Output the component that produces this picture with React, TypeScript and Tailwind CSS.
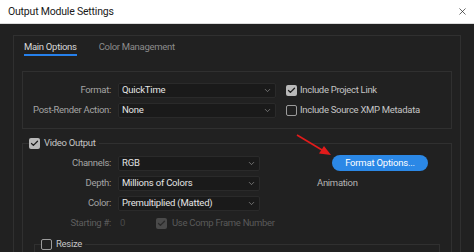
import { ChevronDown, Check, X } from 'lucide-react';

const font = { fontFamily: 'Roboto, "Noto Sans", sans-serif' };

function Dropdown({ value, w }: { value: string; w: string }) {
    return (
        <div className={`${w} flex h-[15px] items-center justify-between rounded-[2px] border border-[#2a2a2a] bg-[#1a1a1a] pr-[3px] pl-[3px]`}>
            <span className="text-[9.5px] tracking-[-0.2px] whitespace-nowrap text-[#e4e4e4]">{value}</span>
            <ChevronDown className="h-[9px] w-[9px] text-[#8a8a8a]" strokeWidth={2} />
        </div>
    );
}

function Box({ checked, dim }: { checked?: boolean; dim?: boolean }) {
    if (checked) {
        return (
            <div className={`flex h-[11px] w-[11px] shrink-0 items-center justify-center rounded-[2px] ${dim ? 'bg-[#4a4a4a]' : 'bg-[#b9b9b9]'}`}>
                <Check className={`h-[9px] w-[9px] ${dim ? 'text-[#2a2a2a]' : 'text-[#1e1e1e]'}`} strokeWidth={3.5} />
            </div>
        );
    }
    return <div className="h-[11px] w-[11px] shrink-0 rounded-[2px] border border-[#9c9c9c]"></div>;
}

function Label({ text, dim }: { text: string; dim?: boolean }) {
    return (
        <div className={`w-[88px] shrink-0 text-right text-[9.5px] tracking-[-0.3px] whitespace-nowrap ${dim ? 'text-[#5e5e5e]' : 'text-[#a4a4a4]'}`}>
            {text}
        </div>
    );
}

export default function App() {
    return (
        <div className="relative flex h-[252px] w-[474px] flex-col overflow-hidden bg-[#212121]" style={font}>
            <div className="flex h-[24px] shrink-0 items-center justify-between border-b border-[#dcdcdc] bg-white pr-[6px] pl-[8px]">
                <span className="text-[10.5px] tracking-[-0.2px] text-[#1a1a1a]">Output Module Settings</span>
                <X className="h-[11px] w-[11px] text-[#222]" strokeWidth={1.5} />
            </div>

            <div className="flex-1 px-[13px] pt-[11px]">
                <div className="h-full border-t border-r border-l border-[#303030] px-[8px]">
                    <div className="flex gap-[22px] pt-[4px] pl-[2px] text-[9.5px] leading-[14px] tracking-[-0.3px]">
                        <span className="border-b-2 border-[#2680eb] text-[#d8d8d8]">Main Options</span>
                        <span className="text-[#8c8c8c]">Color Management</span>
                    </div>

                    <div className="mt-[15px] border border-[#303030] pt-[8px] pb-[8px]">
                        <div className="flex h-[20px] items-center">
                            <Label text="Format:" />
                            <div className="ml-[7px]">
                                <Dropdown value="QuickTime" w="w-[158px]" />
                            </div>
                            <div className="ml-[10px] flex items-center gap-[3px]">
                                <Box checked />
                                <span className="text-[9.5px] tracking-[-0.3px] whitespace-nowrap text-[#c4c4c4]">Include Project Link</span>
                            </div>
                        </div>
                        <div className="flex h-[20px] items-center">
                            <Label text="Post-Render Action:" />
                            <div className="ml-[7px]">
                                <Dropdown value="None" w="w-[158px]" />
                            </div>
                            <div className="ml-[10px] flex items-center gap-[3px]">
                                <Box />
                                <span className="text-[9.5px] tracking-[-0.3px] whitespace-nowrap text-[#c4c4c4]">Include Source XMP Metadata</span>
                            </div>
                        </div>
                    </div>

                    <fieldset className="mt-[8px] border border-[#303030] px-[6px]">
                        <legend className="flex items-center gap-[4px] pr-[3px] text-[9.5px] leading-[12px] tracking-[-0.3px] text-[#c4c4c4]">
                            <Box checked />
                            <span>Video Output</span>
                        </legend>
                        <div className="-mx-[6px] pt-[4px]">
                            <div className="flex h-[20px] items-center">
                                <Label text="Channels:" />
                                <div className="ml-[7px]">
                                    <Dropdown value="RGB" w="w-[142px]" />
                                </div>
                                <button className="ml-[72px] h-[16px] w-[96px] rounded-full bg-[#2b88e6] text-[9.5px] tracking-[-0.2px] text-white">
                                    Format Options...
                                </button>
                            </div>
                            <div className="flex h-[20px] items-center">
                                <Label text="Depth:" />
                                <div className="ml-[7px]">
                                    <Dropdown value="Millions of Colors" w="w-[142px]" />
                                </div>
                                <span className="ml-[57px] text-[9.5px] tracking-[-0.3px] text-[#b4b4b4]">Animation</span>
                            </div>
                            <div className="flex h-[20px] items-center">
                                <Label text="Color:" />
                                <div className="ml-[7px]">
                                    <Dropdown value="Premultiplied (Matted)" w="w-[142px]" />
                                </div>
                            </div>
                            <div className="flex h-[20px] items-center">
                                <Label text="Starting #:" dim />
                                <span className="ml-[9px] w-[36px] text-[9.5px] text-[#4a4a4a]">0</span>
                                <div className="flex items-center gap-[5px]">
                                    <Box checked dim />
                                    <span className="text-[9.5px] tracking-[-0.3px] whitespace-nowrap text-[#5a5a5a]">Use Comp Frame Number</span>
                                </div>
                            </div>
                            <fieldset className="mx-[11px] mt-[5px] h-[30px] border border-[#303030] px-[6px]">
                                <legend className="flex items-center gap-[4px] pr-[3px] text-[9.5px] leading-[12px] tracking-[-0.3px] text-[#c4c4c4]">
                                    <Box />
                                    <span>Resize</span>
                                </legend>
                            </fieldset>
                        </div>
                    </fieldset>
                </div>
            </div>

            <svg className="absolute top-0 left-0" width="474" height="252" viewBox="0 0 474 252">
                <line x1="297" y1="135" x2="322" y2="150" stroke="#e21b1b" strokeWidth="1.6" />
                <polygon points="331,155 319,153.5 324,146" fill="#e21b1b" />
            </svg>
        </div>
    );
}
